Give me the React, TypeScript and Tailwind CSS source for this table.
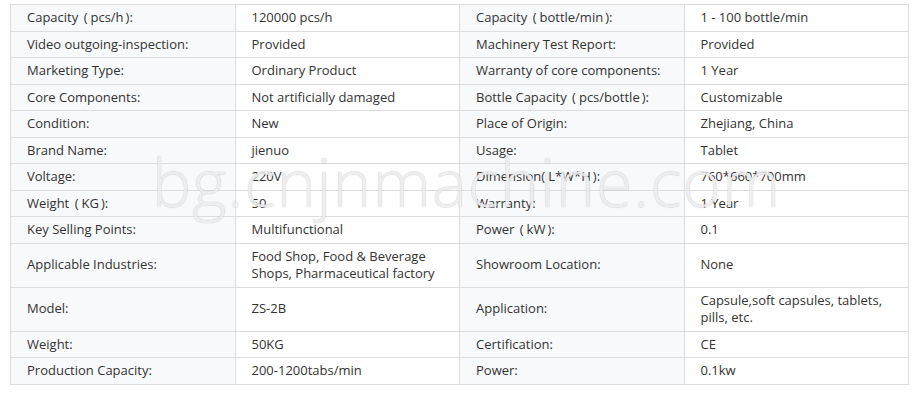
import React from "react";

// wide parens like the source font
const P = ({ children, tight }: { children: React.ReactNode; tight?: boolean }) => (
  <>
    <span className={tight ? "mr-[3px]" : "ml-[2px] mr-[3px]"}>(</span>
    {children}
    <span className="ml-[2px]">)</span>
  </>
);

const rows: [React.ReactNode, React.ReactNode, React.ReactNode, React.ReactNode][] = [
  [<>Capacity <P>pcs/h</P>:</>, "120000 pcs/h", <>Capacity <P>bottle/min</P>:</>, "1 - 100 bottle/min"],
  ["Video outgoing-inspection:", "Provided", "Machinery Test Report:", "Provided"],
  ["Marketing Type:", "Ordinary Product", "Warranty of core components:", "1 Year"],
  ["Core Components:", "Not artificially damaged", <>Bottle Capacity <P>pcs/bottle</P>:</>, "Customizable"],
  ["Condition:", "New", "Place of Origin:", "Zhejiang, China"],
  ["Brand Name:", "jienuo", "Usage:", "Tablet"],
  ["Voltage:", "220V", <>Dimension<P tight>L*W*H</P>:</>, "760*660*700mm"],
  [<>Weight <P>KG</P>:</>, "50", "Warranty:", "1 Year"],
  ["Key Selling Points:", "Multifunctional", <>Power <P>kW</P>:</>, "0.1"],
  [
    "Applicable Industries:",
    <>
      Food Shop, Food &amp; Beverage
      <br />
      Shops, Pharmaceutical factory
    </>,
    "Showroom Location:",
    "None",
  ],
  [
    "Model:",
    "ZS-2B",
    "Application:",
    <>
      Capsule,soft capsules, tablets,
      <br />
      pills, etc.
    </>,
  ],
  ["Weight:", "50KG", "Certification:", "CE"],
  ["Production Capacity:", "200-1200tabs/min", "Power:", "0.1kw"],
];

export default function App() {
  return (
    <div
      className="relative w-[917px] h-[401px] bg-white pl-[10px] pt-[4px] text-[#333] text-[13px] leading-[17.5px]"
      style={{ fontFamily: '"Open Sans", sans-serif' }}
    >
      <table className="w-[899px] table-fixed border-collapse">
        <tbody>
          {rows.map((r, i) => (
            <tr key={i}>
              <td className="w-1/4 border border-[#dddddd] bg-[#f8f9fb] pl-4 pr-2 py-1 align-middle">{r[0]}</td>
              <td className="w-1/4 border border-[#dddddd] bg-white pl-4 pr-2 py-1 align-middle">{r[1]}</td>
              <td className="w-1/4 border border-[#dddddd] bg-[#f8f9fb] pl-4 pr-2 py-1 align-middle">{r[2]}</td>
              <td className="w-1/4 border border-[#dddddd] bg-white pl-4 pr-2 py-1 align-middle">{r[3]}</td>
            </tr>
          ))}
        </tbody>
      </table>

      {/* watermark */}
      <div
        className="pointer-events-none absolute left-[152px] top-[148px] text-[66px] font-light leading-none tracking-[1px] text-white/80 [text-shadow:0_0_1px_rgba(0,0,0,0.35)]"
        style={{ fontFamily: '"Open Sans", sans-serif' }}
      >
        bg.cnjnmachine.com
      </div>
    </div>
  );
}
